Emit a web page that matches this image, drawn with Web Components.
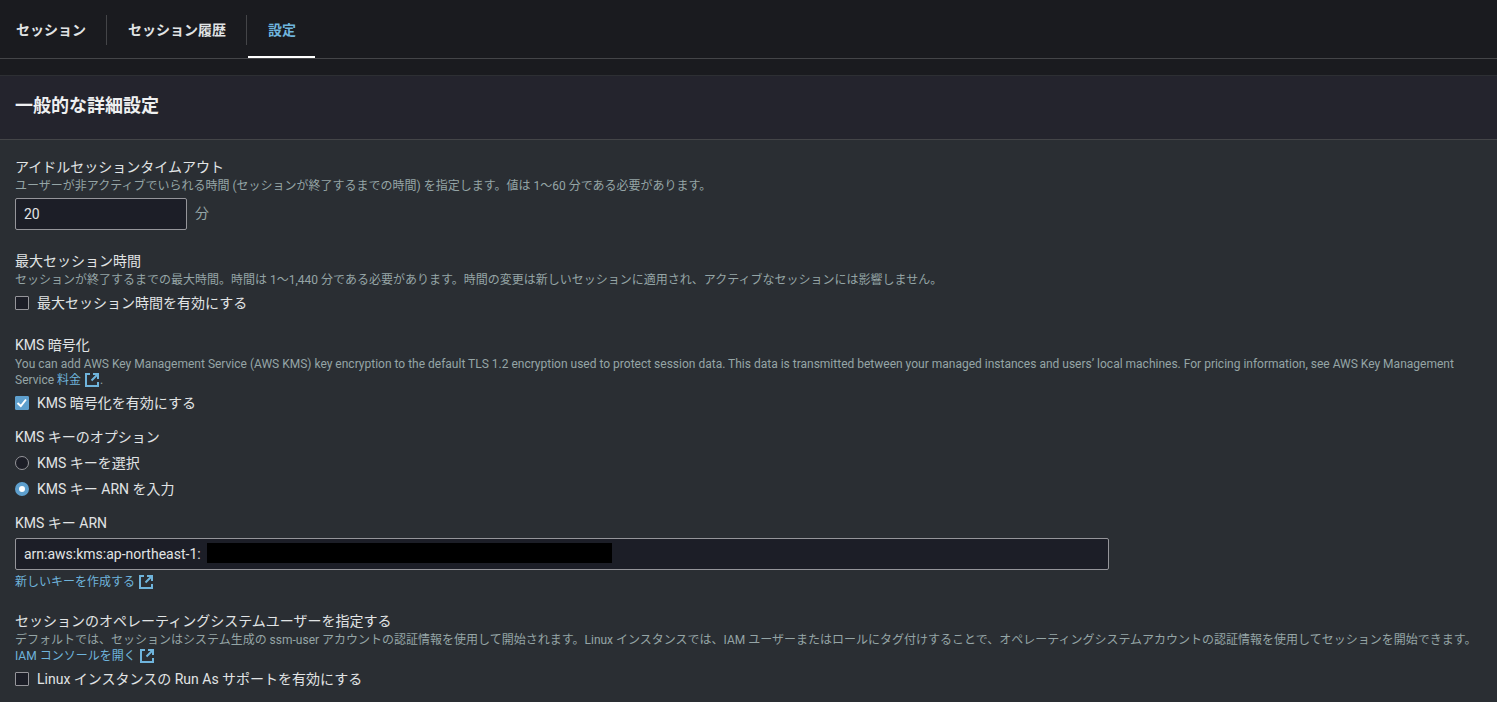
<!DOCTYPE html>
<html lang="ja">
<head>
<meta charset="utf-8">
<meta name="viewport" content="width=device-width, initial-scale=1">
<title>設定</title>
<style>
    :root {
        --page: #1a1b1f;
        --panel: #2a2e33;
        --header: #24242d;
        --field: #1c1e27;
        --line: #444548;
        --border: #95959a;
        --text: #e1e4e5;
        --muted: #95a5a6;
        --link: #6fb4dc;
        --accent: #5e9fcd;
    }

    body {
        margin: 0;
        min-height: 100vh;
        display: flex;
        flex-direction: column;
        background: var(--page);
        color: var(--text);
        font: 14px/22px Roboto, "Noto Sans CJK JP", sans-serif;
    }

    settings-panel {
        flex: 1;
    }
</style>
</head>
<body>
<nav-tabs>
    <nav-tab>セッション</nav-tab>
    <nav-tab>セッション履歴</nav-tab>
    <nav-tab active>設定</nav-tab>
</nav-tabs>

<settings-panel heading="一般的な詳細設定">
    <text-field label="アイドルセッションタイムアウト" value="20" suffix="分" size="small">
        <span slot="description">ユーザーが非アクティブでいられる時間 (セッションが終了するまでの時間) を指定します。値は 1〜60 分である必要があります。</span>
    </text-field>

    <check-field label="最大セッション時間" option="最大セッション時間を有効にする">
        セッションが終了するまでの最大時間。時間は 1〜1,440 分である必要があります。時間の変更は新しいセッションに適用され、アクティブなセッションには影響しません。
    </check-field>

    <field-stack>
        <check-field label="KMS 暗号化" option="KMS 暗号化を有効にする" checked>
            You can add AWS Key Management Service (AWS KMS) key encryption to the default TLS 1.2 encryption used to protect session data. This data is transmitted between your managed instances and users’ local machines. For pricing information, see AWS Key Management Service <external-link>料金</external-link>.
        </check-field>
        <radio-field label="KMS キーのオプション" options="KMS キーを選択|KMS キー ARN を入力" selected="1"></radio-field>
        <text-field label="KMS キー ARN" value="arn:aws:kms:ap-northeast-1:" redacted>
            <external-link slot="footer">新しいキーを作成する</external-link>
        </text-field>
    </field-stack>

    <check-field label="セッションのオペレーティングシステムユーザーを指定する" option="Linux インスタンスの Run As サポートを有効にする">
        デフォルトでは、セッションはシステム生成の ssm-user アカウントの認証情報を使用して開始されます。Linux インスタンスでは、IAM ユーザーまたはロールにタグ付けすることで、オペレーティングシステムアカウントの認証情報を使用してセッションを開始できます。 <external-link>IAM コンソールを開く</external-link>
    </check-field>
</settings-panel>

<script>
    // Styles shared by every form field
    const fieldStyles = `
        :host { display: block; }
        .field { display: grid; gap: 4px; }
        .title { display: block; }
        .description { font-size: 12px; line-height: 16px; color: var(--muted); }
        .option { display: flex; align-items: center; gap: 8px; width: fit-content; }
        input[type="checkbox"], input[type="radio"] {
            appearance: none;
            box-sizing: border-box;
            width: 14px;
            height: 14px;
            margin: 0;
            flex: none;
            background: var(--field);
            border: 1px solid var(--border);
            border-radius: 1px;
        }
        input[type="radio"] { border-radius: 50%; }
        input[type="checkbox"]:checked { background: var(--accent); border-color: var(--accent); }
        input[type="radio"]:checked { background: #fff; border: 4px solid var(--accent); }
        .box { display: grid; }
        .box > * { grid-area: 1 / 1; }
        .box svg { display: none; pointer-events: none; }
        .box input:checked + svg { display: block; }
    `;

    class NavTabs extends HTMLElement {
        constructor() {
            super();
            this.attachShadow({ mode: 'open' });
            this.shadowRoot.innerHTML = `
                <style>
                    :host { display: block; border-bottom: 1px solid var(--line); margin-bottom: 16px; }
                    nav { display: flex; gap: 1px; height: 58px; overflow: hidden; }
                    ::slotted(nav-tab:first-child) { --tab-start: 16px; }
                </style>
                <nav><slot></slot></nav>
            `;
        }
    }

    class NavTab extends HTMLElement {
        constructor() {
            super();
            this.attachShadow({ mode: 'open' });
            this.shadowRoot.innerHTML = `
                <style>
                    :host { display: flex; align-items: center; }
                    button {
                        height: 58px;
                        padding: 4px 19px 0 var(--tab-start, 20px);
                        border: 0;
                        border-bottom: 2px solid transparent;
                        background: none;
                        color: inherit;
                        font: inherit;
                        font-weight: 700;
                        cursor: pointer;
                    }
                    :host([active]) button { color: var(--link); border-bottom-color: #fff; }
                    :host(:not([active]))::after {
                        content: "";
                        width: 1px;
                        height: 30px;
                        margin: 2px 0 0 1px;
                        background: var(--line);
                    }
                </style>
                <button type="button"><slot></slot></button>
            `;
        }
    }

    class SettingsPanel extends HTMLElement {
        constructor() {
            super();
            this.attachShadow({ mode: 'open' });
            this.shadowRoot.innerHTML = `
                <style>
                    :host { display: block; background: var(--panel); border-top: 1px solid #2d2f33; }
                    header {
                        padding: 17px 15px 20px;
                        background: var(--header);
                        border-bottom: 1px solid var(--line);
                    }
                    h2 { margin: 0; font-size: 18px; line-height: 26px; font-weight: 700; color: #eff0f1; }
                    .body { display: grid; gap: 20px; padding: 16px 15px 12px; }
                </style>
                <header><h2>${this.getAttribute('heading')}</h2></header>
                <div class="body"><slot></slot></div>
            `;
        }
    }

    class FieldStack extends HTMLElement {
        constructor() {
            super();
            this.attachShadow({ mode: 'open' });
            this.shadowRoot.innerHTML = `
                <style>:host { display: grid; gap: 12px; }</style>
                <slot></slot>
            `;
        }
    }

    class TextField extends HTMLElement {
        constructor() {
            super();
            this.attachShadow({ mode: 'open' });
            const suffix = this.getAttribute('suffix');
            this.shadowRoot.innerHTML = `
                <style>
                    ${fieldStyles}
                    .row { display: grid; grid-template-columns: 3fr 1fr; gap: 8px; }
                    :host([size="small"]) .row { grid-template-columns: 172px auto; }
                    .control { position: relative; }
                    input {
                        box-sizing: border-box;
                        display: block;
                        width: 100%;
                        height: 32px;
                        padding: 0 8px;
                        border: 1px solid var(--border);
                        border-radius: 2px;
                        background: var(--field);
                        color: var(--text);
                        font: inherit;
                    }
                    .suffix { line-height: 30px; color: var(--muted); }
                    .mask { position: absolute; left: 192px; top: 5px; width: 405px; height: 20px; background: #000; }
                    .footer { display: block; font-size: 12px; line-height: 16px; }
                </style>
                <div class="field">
                    <div>
                        <label class="title" for="input">${this.getAttribute('label')}</label>
                        <div class="description"><slot name="description"></slot></div>
                    </div>
                    <div class="row">
                        <div class="control">
                            <input id="input" type="text" value="${this.getAttribute('value')}">
                            ${this.hasAttribute('redacted') ? '<div class="mask"></div>' : ''}
                        </div>
                        ${suffix ? `<span class="suffix">${suffix}</span>` : ''}
                    </div>
                    ${this.querySelector('[slot="footer"]') ? '<div class="footer"><slot name="footer"></slot></div>' : ''}
                </div>
            `;
        }
    }

    class CheckField extends HTMLElement {
        constructor() {
            super();
            this.attachShadow({ mode: 'open' });
            this.shadowRoot.innerHTML = `
                <style>${fieldStyles}</style>
                <div class="field" role="group" aria-labelledby="title">
                    <div>
                        <span class="title" id="title">${this.getAttribute('label')}</span>
                        <div class="description"><slot></slot></div>
                    </div>
                    <label class="option" for="check">
                        <span class="box">
                            <input id="check" type="checkbox" ${this.hasAttribute('checked') ? 'checked' : ''}>
                            <svg width="14" height="14" viewBox="0 0 14 14" fill="none" stroke="#fff" stroke-width="2">
                                <path d="M2.5 7 L5.8 10 L11 3.5"/>
                            </svg>
                        </span>
                        <span>${this.getAttribute('option')}</span>
                    </label>
                </div>
            `;
        }
    }

    class RadioField extends HTMLElement {
        constructor() {
            super();
            this.attachShadow({ mode: 'open' });
            const selected = Number(this.getAttribute('selected'));
            const options = this.getAttribute('options').split('|').map((text, i) => `
                <label class="option" for="radio-${i}">
                    <input id="radio-${i}" type="radio" name="option" ${i === selected ? 'checked' : ''}>
                    <span>${text}</span>
                </label>
            `).join('');
            this.shadowRoot.innerHTML = `
                <style>${fieldStyles}</style>
                <div class="field" role="radiogroup" aria-labelledby="title">
                    <span class="title" id="title">${this.getAttribute('label')}</span>
                    ${options}
                </div>
            `;
        }
    }

    class ExternalLink extends HTMLElement {
        constructor() {
            super();
            this.attachShadow({ mode: 'open' });
            // No whitespace after the link, punctuation may follow it
            this.shadowRoot.innerHTML = `<style>
                    :host { display: inline; white-space: nowrap; }
                    a { color: var(--link); text-decoration: none; }
                    svg { margin-left: 4px; vertical-align: -3px; }
                </style><a href="#"><slot></slot><svg width="15" height="14" viewBox="0 0 15 14" fill="none" stroke="currentColor" stroke-width="2">
                    <path d="M5 1 H1 V13 H13 V9"/>
                    <path d="M8 1 H13 V6 M13 1 L6.5 7.5"/>
                </svg></a>`;
        }
    }

    customElements.define('nav-tabs', NavTabs);
    customElements.define('nav-tab', NavTab);
    customElements.define('settings-panel', SettingsPanel);
    customElements.define('field-stack', FieldStack);
    customElements.define('text-field', TextField);
    customElements.define('check-field', CheckField);
    customElements.define('radio-field', RadioField);
    customElements.define('external-link', ExternalLink);
</script>
</body>
</html>
